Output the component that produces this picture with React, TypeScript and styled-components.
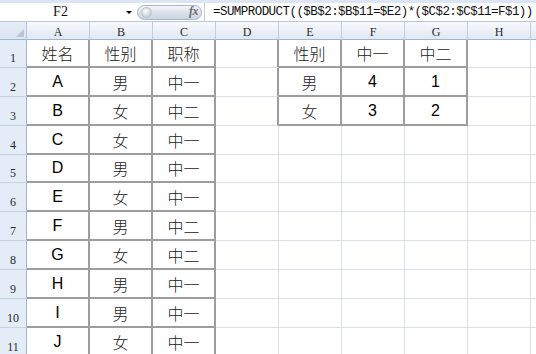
import React from "react";
import styled, { createGlobalStyle } from "styled-components";

const GlobalStyle = createGlobalStyle`
  html, body { margin: 0; padding: 0; background: #fff; overflow: hidden; }
  #root { width: 536px; height: 354px; overflow: hidden; }
`;

const Screen = styled.div`
  width: 536px;
  height: 354px;
  overflow: hidden;
  background: #fff;
  display: flex;
  flex-direction: column;
`;

const FormulaBar = styled.div`
  flex: none;
  height: 22px;
  box-sizing: border-box;
  padding-top: 3px;
  background: #dbe5f3;
  border-bottom: 1px solid #b9c7d9;
  display: flex;
`;

const NameBox = styled.div`
  width: 121px;
  background: #fff;
  display: flex;
  align-items: center;
  justify-content: center;
  font-family: "Liberation Serif", serif;
  font-size: 14px;
  color: #111;
`;

const DropZone = styled.div`
  width: 16px;
  background: #fff;
  display: flex;
  align-items: center;
  justify-content: flex-start;
`;

const DropArrow = styled.span`
  width: 0;
  height: 0;
  margin-left: 5px;
  margin-top: 1px;
  border-left: 3px solid transparent;
  border-right: 3px solid transparent;
  border-top: 3px solid #000;
`;

const PillWrap = styled.div`
  width: 67px;
  background: #fff;
  display: flex;
  align-items: center;
`;

const FxPill = styled.div`
  width: 65px;
  height: 15px;
  box-sizing: border-box;
  border: 1px solid #a7b6ca;
  border-radius: 8px;
  background: linear-gradient(#f4f6fa, #d9e0ea 55%, #cbd4e1);
  display: flex;
  align-items: center;
  justify-content: space-between;
  padding: 0 2px 0 3px;
`;

const Knob = styled.span`
  width: 9px;
  height: 9px;
  border-radius: 50%;
  background: radial-gradient(circle at 40% 35%, #ffffff, #c9d0da 70%, #aeb8c6);
  border: 1px solid #b8c2d0;
`;

const FxLabel = styled.span`
  font-family: "Liberation Serif", serif;
  font-style: italic;
  font-weight: bold;
  font-size: 12px;
  color: #6c6c6c;
  letter-spacing: -0.5px;
  padding-right: 1px;
  padding-bottom: 1px;
`;

const FormulaInput = styled.div`
  flex: 1;
  background: #fff;
  border-left: 1px solid #c3cedc;
  padding-left: 8px;
  display: flex;
  align-items: center;
  font-family: "Liberation Mono", monospace;
  font-size: 12.5px;
  letter-spacing: -0.55px;
  color: #111;
  white-space: nowrap;
  overflow: hidden;
`;

const Sheet = styled.div<{ $rows: string }>`
  display: grid;
  grid-template-columns: 27px repeat(9, 63px);
  grid-template-rows: ${(p) => p.$rows};
`;

const Corner = styled.div`
  box-sizing: border-box;
  background: linear-gradient(#e6edf7, #dbe4f1);
  border-right: 1px solid #b7c6da;
  border-bottom: 1px solid #9eb6ce;
  position: relative;
  &::after {
    content: "";
    position: absolute;
    right: 2px;
    bottom: 2px;
    width: 0;
    height: 0;
    border-left: 8px solid transparent;
    border-bottom: 8px solid #b9c4d3;
  }
`;

const ColHeader = styled.div`
  box-sizing: border-box;
  background: linear-gradient(#f7f9fc, #e9eef6 60%, #e1e8f2);
  border-right: 1px solid #c3ccd9;
  border-bottom: 1px solid #9eb6ce;
  display: flex;
  align-items: center;
  justify-content: center;
  padding-top: 3px;
  font-family: "Liberation Serif", serif;
  font-size: 12px;
  color: #2b2b2b;
`;

const RowHeader = styled.div`
  box-sizing: border-box;
  background: #e4ecf7;
  border-right: 1px solid #9eb6ce;
  border-bottom: 1px solid #c5d4e6;
  display: flex;
  align-items: flex-end;
  justify-content: center;
  padding-bottom: 1px;
  font-family: "Liberation Serif", serif;
  font-size: 12px;
  color: #2b2b2b;
`;

type Edge = "grid" | "thick";

const Cell = styled.div<{ $right: Edge; $bottom: Edge; $latin: boolean }>`
  box-sizing: border-box;
  background: #fff;
  border-right: ${(p) => (p.$right === "thick" ? "2px solid #9d9d9d" : "1px solid #dadfe8")};
  border-bottom: ${(p) => (p.$bottom === "thick" ? "2px solid #9d9d9d" : "1px solid #dadfe8")};
  display: flex;
  align-items: center;
  justify-content: center;
  font-family: ${(p) =>
    p.$latin
      ? '"Liberation Sans", Arial, sans-serif'
      : '"Noto Sans CJK SC", "Noto Sans", sans-serif'};
  font-size: 16px;
  font-weight: ${(p) => (p.$latin ? 400 : 300)};
  color: ${(p) => (p.$latin ? "#000" : "#222")};
  line-height: 1;
`;

const COLS = ["A", "B", "C", "D", "E", "F", "G", "H", "I"];
const ROW_HEIGHTS = [28, 29, 29, 29, 28, 29, 29, 29, 29, 29, 29];

const names = ["A", "B", "C", "D", "E", "F", "G", "H", "I", "J"];
const genders = ["男", "女", "女", "男", "女", "男", "女", "男", "男", "女"];
const titles = ["中一", "中二", "中一", "中一", "中一", "中二", "中二", "中一", "中一", "中一"];

const values: Record<string, string> = {
  A1: "姓名",
  B1: "性别",
  C1: "职称",
  E1: "性别",
  F1: "中一",
  G1: "中二",
  E2: "男",
  F2: "4",
  G2: "1",
  E3: "女",
  F3: "3",
  G3: "2",
};
names.forEach((n, i) => {
  values[`A${i + 2}`] = n;
  values[`B${i + 2}`] = genders[i];
  values[`C${i + 2}`] = titles[i];
});

const bordered = (r: number, c: number) =>
  (c >= 0 && c <= 2 && r >= 1 && r <= 11) || (c >= 4 && c <= 6 && r >= 1 && r <= 3);

const FORMULA = "=SUMPRODUCT(($B$2:$B$11=$E2)*($C$2:$C$11=F$1))";

export default function App() {
  const rowsTemplate = ["18px", ...ROW_HEIGHTS.map((h) => `${h}px`)].join(" ");
  return (
    <>
      <GlobalStyle />
      <Screen>
        <FormulaBar>
          <NameBox>F2</NameBox>
          <DropZone>
            <DropArrow />
          </DropZone>
          <PillWrap>
            <FxPill>
              <Knob />
              <FxLabel>fx</FxLabel>
            </FxPill>
          </PillWrap>
          <FormulaInput>{FORMULA}</FormulaInput>
        </FormulaBar>
        <Sheet $rows={rowsTemplate}>
          <Corner />
          {COLS.map((c, i) => (
            <ColHeader key={c}>{i < 8 ? c : ""}</ColHeader>
          ))}
          {ROW_HEIGHTS.map((_, ri) => {
            const r = ri + 1;
            return (
              <React.Fragment key={r}>
                <RowHeader>{r}</RowHeader>
                {COLS.map((col, ci) => {
                  const v = values[`${col}${r}`] ?? "";
                  const right: Edge =
                    bordered(r, ci) || bordered(r, ci + 1) ? "thick" : "grid";
                  const bottom: Edge =
                    bordered(r, ci) || bordered(r + 1, ci) ? "thick" : "grid";
                  const latin = /^[A-Za-z0-9]+$/.test(v);
                  return (
                    <Cell key={col} $right={right} $bottom={bottom} $latin={latin}>
                      {v}
                    </Cell>
                  );
                })}
              </React.Fragment>
            );
          })}
        </Sheet>
      </Screen>
    </>
  );
}
